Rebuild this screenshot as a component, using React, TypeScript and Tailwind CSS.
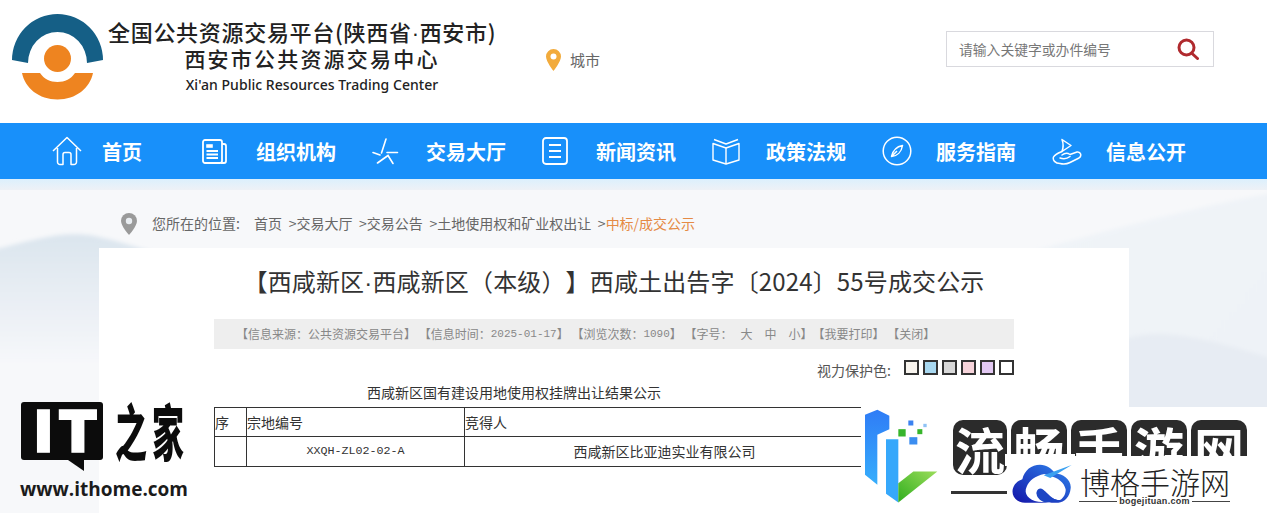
import type { ReactNode } from 'react';

const cjk = 'font-["Noto_Sans_CJK_SC","Liberation_Sans",sans-serif]';
const mono = "font-['Liberation_Mono',monospace] text-[11px] leading-none";

const Dot = () => <span className="font-['Liberation_Sans',sans-serif] leading-none">·</span>;

const SiteLogo = () => (
  <svg width="92" height="88" viewBox="12 13 92 88" className="shrink-0">
    <path d="M12 60A45.500 46 0 0 1 103 60L87 63A29.500 31 0 0 0 28 63Z" fill="#155f86" />
    <ellipse cx="57.500" cy="58.500" rx="13.500" ry="13.500" fill="#ee8420" />
    <path d="M22 73H40C44 79 50 82 57.500 82C65 82 71 79 75 73H93C90 88 76 99.500 57.500 99.500C39 99.500 25 88 22 73Z" fill="#ee8420" />
  </svg>
);

const HomeIcon = () => (
  <svg width="30" height="30" viewBox="0 0 30 30" fill="none" stroke="currentColor" strokeWidth="1.500" strokeLinejoin="round">
    <path d="M1 15L15 1.500L29 15M5.500 12V26a2.500 2.500 0 0 0 2.500 2.500h3V18.500a2 2 0 0 1 2-2h4a2 2 0 0 1 2 2v10h3a2.500 2.500 0 0 0 2.500-2.500V12" />
  </svg>
);

const PaperIcon = () => (
  <svg width="25" height="25" viewBox="0 0 25 25" fill="none" stroke="currentColor" strokeWidth="1.800">
    <rect x="1" y="1" width="19" height="23" rx="2" />
    <path d="M20 5h2a2 2 0 0 1 2 2v15a2 2 0 0 1-2 2h-3" />
    <path d="M4.500 5.500h6v3h-6z" fill="currentColor" strokeWidth="0.600" />
    <path d="M4.500 12h11.500M4.500 15.500h11.500M4.500 19h11.500" />
  </svg>
);

const StarIcon = () => (
  <svg width="28" height="27" viewBox="0 0 28 27" fill="none" stroke="currentColor" strokeWidth="1.600" strokeLinecap="round" className="-ml-px">
    <path d="M15 1L10.500 15M2 14.500L9 17M16 14.500H26.500M6.500 25L17 17.500L22 25.500" />
  </svg>
);

const ListIcon = () => (
  <svg width="26" height="28" viewBox="0 0 26 28" fill="none" stroke="currentColor" strokeWidth="1.800">
    <rect x="1" y="1" width="24" height="26" rx="3" />
    <path d="M7 8h12M7 14h12M7 20h12" />
  </svg>
);

const BookIcon = () => (
  <svg width="28" height="27" viewBox="0 0 28 27" fill="none" stroke="currentColor" strokeWidth="1.400" strokeLinejoin="round">
    <path d="M1 5.500L14 10L27 5.500V22L14 26L1 22Z" />
    <path d="M14 10V26M2 1.500L14 6L26 1.500" />
  </svg>
);

const CompassIcon = () => (
  <svg width="30" height="30" viewBox="0 0 30 30" fill="none" stroke="currentColor" strokeWidth="1.500" strokeLinejoin="round">
    <circle cx="15" cy="15" r="13.800" />
    <path d="M20.500 9.500C15 10.500 11 14 9.500 20.500C15 20 19.500 16 20.500 9.500ZM9.500 20.500L15 15" />
  </svg>
);

const HandIcon = () => (
  <svg width="30" height="27" viewBox="0 0 30 27" fill="none" stroke="currentColor" strokeWidth="1.500" strokeLinejoin="round" strokeLinecap="round">
    <path d="M10 1.500L19 7.500L10 13.500C11.500 9.500 11.500 5.500 10 1.500Z" />
    <path d="M10 13.500C6 15 3 16 1.500 19C0.500 22 3 25.500 8 25.500C12 26.500 15 26 18 24.500L27 20C30 18 29 13.500 25 14L18 16.500C15 14.500 12 15.500 10 17" />
    <path d="M8 20C12 21.500 15.500 20.500 18 18.500" />
  </svg>
);

const navItems: { label: string; icon: ReactNode }[] = [
  { label: '组织机构', icon: <PaperIcon /> },
  { label: '交易大厅', icon: <StarIcon /> },
  { label: '新闻资讯', icon: <ListIcon /> },
  { label: '政策法规', icon: <BookIcon /> },
  { label: '服务指南', icon: <CompassIcon /> },
  { label: '信息公开', icon: <HandIcon /> },
];

const eyeColors = [
  'bg-[#f8f4ee]',
  'bg-[#a8d8f0]',
  'bg-[#d8d8d8]',
  'bg-[#f6d3da]',
  'bg-[#e2c8f2]',
  'bg-white',
];

// page background: washed out ink mountains
const Hills = () => (
  <svg className="absolute inset-0 h-full w-full" viewBox="0 0 1267 334" preserveAspectRatio="none">
    <defs>
      <linearGradient id="hillLeft" x1="0" y1="0" x2="0" y2="1">
        <stop offset="0" stopColor="#dbe5ee" />
        <stop offset="1" stopColor="#f6f7fa" />
      </linearGradient>
      <linearGradient id="hillRight" x1="0" y1="0" x2="1" y2="1">
        <stop offset="0" stopColor="#f0f4f8" />
        <stop offset="1" stopColor="#eef2f7" />
      </linearGradient>
      <filter id="soft"><feGaussianBlur stdDeviation="1.500" /></filter>
    </defs>
    <rect width="1267" height="334" fill="#f7f8fa" />
    <path d="M-5 50C30 44 60 37 90 40C130 45 170 58 245 70V130H-5Z" fill="url(#hillLeft)" filter="url(#soft)" />
    <path d="M1000 58C1080 42 1180 22 1272 10V240H1000Z" fill="url(#hillRight)" filter="url(#soft)" />
    <path d="M1125 114C1160 106 1200 112 1272 128V240H1125Z" fill="#e7ecf3" filter="url(#soft)" />
  </svg>
);

const WatermarkRight = () => (
  <div className="absolute left-[861px] top-[407px] h-[106px] w-[406px] bg-white">
    <svg className="absolute left-[4px] top-[1px]" width="75" height="97" viewBox="255 205 225 290">
      <defs>
        <linearGradient id="lBlue" x1="0" y1="0" x2="0" y2="1">
          <stop offset="0" stopColor="#2f7cf6" />
          <stop offset="1" stopColor="#36aefc" />
        </linearGradient>
        <linearGradient id="lGreen" x1="0" y1="1" x2="1" y2="0">
          <stop offset="0" stopColor="#2fae1e" />
          <stop offset="1" stopColor="#9bdc5a" />
        </linearGradient>
      </defs>
      <path d="M255 225L292 210L328 228V268L292 285V435L255 405Z" fill="url(#lBlue)" />
      <path d="M318 298H355V488L318 462Z" fill="#36a8fb" />
      <path d="M355 430L400 395H472L355 488Z" fill="url(#lGreen)" />
      <rect x="385" y="242" width="15" height="15" fill="#3b82f0" />
      <rect x="430" y="252" width="10" height="10" fill="#8fc2f5" />
      <rect x="355" y="268" width="22" height="22" fill="#37b52b" />
      <rect x="412" y="268" width="15" height="15" fill="#37b52b" />
      <rect x="388" y="292" width="24" height="22" fill="#3b8df0" />
    </svg>

    <div className={`absolute left-[92px] top-[13px] flex items-start gap-[4px] font-bold text-white ${cjk}`}>
      <span className="flex h-[55px] w-[54px] items-center justify-center rounded-[10px] bg-[#2b2b2b] text-[50px] leading-none">流</span>
      {['畅', '手', '游', '网'].map((c) => (
        <span key={c} className="h-[36px] w-[56px] overflow-hidden rounded-t-[10px] bg-[#2b2b2b] pt-[3px] text-center text-[50px] leading-none">{c}</span>
      ))}
    </div>
    <div className="absolute left-[90px] top-[84px] h-[3px] w-[56px] bg-[#333]" />

    <div className="absolute left-[144px] top-[47px] h-[12px] w-[70px] bg-white" />
    <svg className="absolute left-[144px] top-[53px]" width="75" height="50" viewBox="0 0 225 150">
      <defs>
        <linearGradient id="cloud" x1="0" y1="1" x2="1" y2="0">
          <stop offset="0" stopColor="#1414a8" />
          <stop offset="1" stopColor="#2f86ee" />
        </linearGradient>
      </defs>
      <path d="M60 128C30 128 18 104 24 85C28 70 40 62 52 58C58 30 80 14 105 14C125 14 140 25 150 40C175 42 200 60 197 85C195 110 178 128 160 128Z" fill="url(#cloud)" />
      <path d="M100 125C70 120 55 100 65 80C72 62 90 48 118 42L135 48C158 52 178 68 182 88C183 100 176 115 165 120C150 122 140 112 125 98C112 85 98 88 95 98C95 105 105 118 140 128Z" fill="#fff" />
      <path d="M95 95C100 80 115 85 120 95C125 108 140 115 165 122L120 127C105 122 92 110 95 95Z" fill="#1c45c4" />
      <path d="M116 46L200 15L136 54Z" fill="#3aa0f0" />
    </svg>

    <div className={`absolute left-[219px] top-[56px] text-[30px] font-light leading-[36px] text-[#222] ${cjk}`}>博格手游网</div>
    <div className="absolute left-[218px] top-[90px] flex w-[151px] items-center gap-[2px] font-['Liberation_Sans',sans-serif] text-[9px] font-bold leading-[8px] tracking-[0.3px] text-[#333]">
      <span className="h-px flex-1 bg-[#444]" />
      bogejituan.com
      <span className="h-px flex-1 bg-[#444]" />
    </div>
  </div>
);

const WatermarkLeft = () => (
  <div className="absolute left-[21px] top-[402px] w-[170px]">
    <div className="flex items-start">
      <div className="relative h-[58px] w-[82px] rounded-[3px] bg-[#0c0c0c]">
        <span className="absolute left-[14px] top-[-8px] font-['Inter',sans-serif] text-[58px] font-black leading-[74px] tracking-[6px] text-white [-webkit-text-stroke:1.5px_white]">IT</span>
        <span className="absolute left-[47px] top-[58px] h-0 w-0 border-l-[16px] border-t-[11px] border-l-transparent border-t-[#0c0c0c]" />
      </div>
      <span className={`-mt-[9px] ml-[12px] origin-top scale-y-[1.9] whitespace-nowrap text-[32px] font-black leading-[38px] tracking-[5px] text-[#0c0c0c] ${cjk}`}>之家</span>
    </div>
    <div className="-ml-px mt-[19px] font-['Open_Sans',sans-serif] text-[19px] font-bold leading-[20px] text-[#1b1b1b]">www.ithome.com</div>
  </div>
);

export default function App() {
  return (
    <div className={`relative flex h-[513px] w-[1267px] flex-col overflow-hidden bg-white [text-spacing-trim:space-all] ${cjk}`}>
      <header className="flex h-[123px] shrink-0 pl-[12px] pt-[13px]">
        <SiteLogo />
        <div className="ml-[4px] flex w-[387px] flex-col items-start pt-[5px] text-[#222]">
          <div className="whitespace-nowrap text-[22px] font-medium leading-[27px] tracking-[0.7px]">全国公共资源交易平台(陕西省<Dot />西安市)</div>
          <div className="flex w-[408px] flex-col items-center">
            <div className="whitespace-nowrap text-[21px] font-medium leading-[27px] tracking-[2.2px]">西安市公共资源交易中心</div>
            <div className="mt-[3px] whitespace-nowrap font-['Noto_Sans',sans-serif] text-[14px] font-medium leading-[20px] tracking-[0.04px]">Xi'an Public Resources Trading Center</div>
          </div>
        </div>
        <div className="ml-[51px] flex h-[94px] items-center gap-[9px] text-[15px] text-[#666]">
          <svg width="15" height="22" viewBox="0 0 15 22">
            <path d="M7.500 0A7.500 7.500 0 0 0 0 7.500C0 12.500 7.500 22 7.500 22S15 12.500 15 7.500A7.500 7.500 0 0 0 7.500 0Z" fill="#f2ab3c" />
            <circle cx="7.500" cy="7.500" r="3" fill="#fff" />
          </svg>
          城市
        </div>
        <div className="ml-[346px] mt-[18px] flex h-[36px] w-[268px] items-center justify-between border border-[#d9d9de] pl-[12px] pr-[14px] text-[13.800px] text-[#777]">
          <span>请输入关键字或办件编号</span>
          <svg width="22" height="22" viewBox="0 0 22 22" fill="none" stroke="#b02a2e" strokeWidth="3">
            <circle cx="9.500" cy="9.500" r="7.500" />
            <path d="M14.500 15L20.500 20.500" strokeLinecap="round" />
          </svg>
        </div>
      </header>

      <nav className="flex h-[56px] shrink-0 items-center bg-[#1890fa] pl-[48px] text-[20px] font-bold text-white">
        <div className="flex w-[154px] items-center">
          <span className="ml-[4px] mr-[20px] flex w-[30px] justify-center"><HomeIcon /></span>
          <span className="pt-[1px]">首页</span>
        </div>
        {navItems.map((item) => (
          <div key={item.label} className="flex w-[170px] items-center">
            <span className="mr-[24px] flex w-[30px] justify-start">{item.icon}</span>
            <span className="pt-[1px]">{item.label}</span>
          </div>
        ))}
      </nav>

      <main className="relative flex-1">
        <Hills />
        <div className="relative">
          <div className="h-[11px] bg-gradient-to-b from-[#dcf0fd] to-[#eef1f6]" />
          <div className="flex h-[58px] items-center pl-[121px] pt-[8px] text-[14px] text-[#666]">
            <svg width="16" height="22" viewBox="0 0 16 22" className="mr-[15px] mt-[2px]">
              <path d="M8 0A8 8 0 0 0 0 8C0 13 8 22 8 22S16 13 16 8A8 8 0 0 0 8 0Z" fill="#9a9a9a" />
              <circle cx="8" cy="8" r="3.200" fill="#e9edf1" />
            </svg>
            <span className="w-[102px]">您所在的位置:</span>
            <span className="whitespace-pre [word-spacing:3.500px]">首页 &gt;交易大厅 &gt;交易公告 &gt;土地使用权和矿业权出让 &gt;<span className="text-[#e58a45]">中标/成交公示</span></span>
          </div>
          <div className="ml-[99px] flex h-[400px] w-[1030px] flex-col bg-white px-[115px]">
            <h1 className="whitespace-nowrap pt-[16px] text-center text-[24px] font-normal leading-[34px] tracking-[0.15px] text-[#333]">【西咸新区<Dot />西咸新区（本级）】西咸土出告字〔2024〕55号成交公示</h1>
            <div className="mt-[21px] flex h-[30px] items-center whitespace-pre bg-[#eeeeee] pl-[22px] text-[12px] text-[#888]">
              【信息来源：公共资源交易平台】 【信息时间：<span className={mono}>2025-01-17</span>】 【浏览次数：<span className={mono}>1090</span>】 【字号：<span className="ml-[8px]">大</span><span className="ml-[12px]">中</span><span className="ml-[12px]">小</span>】【我要打印】 【关闭】
            </div>
            <div className="mt-[10px] flex h-[20px] items-start justify-end text-[14px] text-[#555]">
              <span className="mr-[13px] pt-[1px]">视力保护色:</span>
              <div className="flex gap-[4px] pt-[1px]">
                {eyeColors.map((c) => (
                  <span key={c} className={`h-[15px] w-[15px] border-2 border-[#333] ${c}`} />
                ))}
              </div>
            </div>
            <p className="mt-[3px] w-[600px] text-center text-[14px] leading-[20px] text-[#333]">西咸新区国有建设用地使用权挂牌出让结果公示</p>
            <table className="mt-[5px] w-[651px] table-fixed border-collapse text-[14px] text-[#333]">
              <colgroup>
                <col className="w-[32px]" />
                <col className="w-[218px]" />
                <col />
              </colgroup>
              <tbody>
                <tr className="h-[29px]">
                  <td className="border border-[#333]">序</td>
                  <td className="border border-[#333]">宗地编号</td>
                  <td className="border border-[#333]">竞得人</td>
                </tr>
                <tr className="h-[30px]">
                  <td className="border border-[#333]" />
                  <td className="border border-[#333] text-center font-['Liberation_Mono',monospace] text-[11.700px]">XXQH-ZL02-02-A</td>
                  <td className="border border-[#333] text-center">西咸新区比亚迪实业有限公司</td>
                </tr>
              </tbody>
            </table>
          </div>
        </div>
      </main>

      <WatermarkLeft />
      <WatermarkRight />
    </div>
  );
}
